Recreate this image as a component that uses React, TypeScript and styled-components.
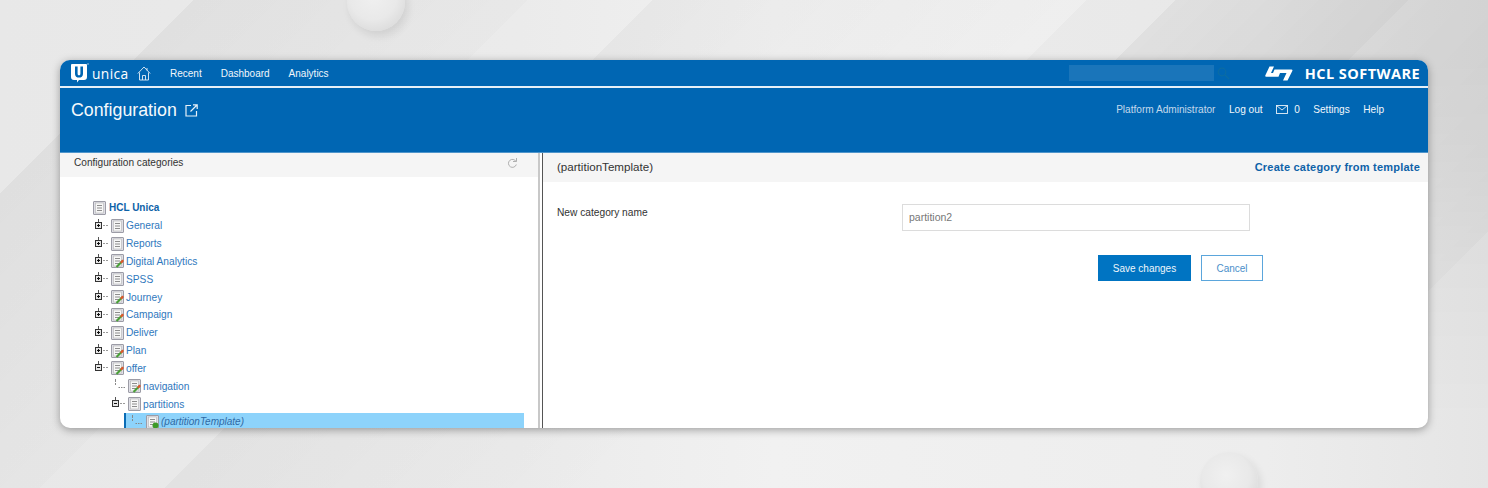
import React from 'react'
import styled, { createGlobalStyle } from 'styled-components'

const GlobalStyle = createGlobalStyle`
    html, body {
        margin: 0;
        padding: 0;
    }
    body {
        font-family: 'Liberation Sans', Arial, sans-serif;
        overflow: hidden;
    }
`

const Backdrop = styled.div`
    position: relative;
    width: 1488px;
    height: 488px;
    overflow: hidden;
    padding: 60px;
    box-sizing: border-box;
    background:
        linear-gradient(135deg, transparent 9.77%, rgba(0, 0, 0, 0.04) 9.77%, rgba(0, 0, 0, 0.012) 26.7%, transparent 26.7%),
        linear-gradient(135deg, transparent 33%, rgba(0, 0, 0, 0.03) 33%, transparent 55%),
        linear-gradient(90deg, #e8e8e8, #ebebeb 35%, #f1f1f1 52%, #ededed 85%, #e5e5e5);

    &::before {
        content: '';
        position: absolute;
        inset: 0;
        background: linear-gradient(
            135deg,
            transparent 55%,
            rgba(0, 0, 0, 0.02) 55%,
            rgba(0, 0, 0, 0.02) 59.5%,
            rgba(0, 0, 0, 0.06) 59.5%,
            rgba(0, 0, 0, 0.095) 71.3%,
            rgba(0, 0, 0, 0.07) 71.3%,
            rgba(0, 0, 0, 0.1) 87%,
            rgba(0, 0, 0, 0.06) 87%
        );
        mask-image: linear-gradient(to bottom, #000 60px, transparent 420px);
    }
`

const Sphere = styled.div<{ $left: number; $top: number }>`
    position: absolute;
    left: ${({ $left }) => $left}px;
    top: ${({ $top }) => $top}px;
    width: 58px;
    height: 58px;
    border-radius: 50%;
    background: radial-gradient(circle at 45% 40%, #f0f0f0 0%, #e9e9e9 50%, #dcdcdc 78%, #c0c0c0 100%);
    box-shadow: 3px 5px 9px rgba(0, 0, 0, 0.09);
`

const Panel = styled.div`
    position: relative;
    width: 1368px;
    height: 368px;
    display: flex;
    flex-direction: column;
    border-radius: 10px;
    overflow: hidden;
    background: #fff;
    box-shadow: 0 2px 9px rgba(0, 0, 0, 0.34);
`

const TopBar = styled.div`
    height: 26px;
    flex: none;
    display: flex;
    align-items: center;
    padding: 0 8px 0 11px;
    background: #0066b3;
    border-bottom: 2px solid #e6f0f8;
`

const Brand = styled.div`
    display: flex;
    align-items: center;
    width: 66px;
    flex: none;
    gap: 3px;
    color: #fff;
    font-family: 'Open Sans', sans-serif;
    font-size: 13.8px;
    letter-spacing: 0.4px;
`

const Nav = styled.nav`
    display: flex;
    gap: 19px;
    margin-left: 19px;
`

const NavLink = styled.span`
    color: #f2f7fb;
    font-size: 10px;
`

const SearchBox = styled.div`
    margin-left: auto;
    width: 145px;
    height: 16px;
    background: #1a75ba;
`

const SearchGlyph = styled.div`
    display: flex;
    margin-left: 3px;
    margin-right: 35px;
    color: #0b6ca4;
`

const SoftwareMark = styled.div`
    display: flex;
    align-items: center;
    gap: 12px;
    color: #fff;
    font-family: 'Open Sans', sans-serif;
    font-size: 14.5px;
    font-weight: 700;
    letter-spacing: 0.45px;
`

const Header = styled.header`
    height: 64px;
    flex: none;
    display: flex;
    justify-content: space-between;
    padding: 10px 44px 0 11px;
    box-sizing: border-box;
    background: #0066b3;
`

const PageTitle = styled.h1`
    display: flex;
    align-items: center;
    gap: 8px;
    height: 24px;
    margin: 0;
    color: #f5f9fc;
    font-size: 17.8px;
    font-weight: 400;
`

const UserLinks = styled.div`
    display: flex;
    align-items: center;
    gap: 13.5px;
    height: 23px;
    color: #f2f7fb;
    font-size: 10.1px;
`

const MutedLink = styled.span`
    color: #c3d9ec;
`

const Mail = styled.span`
    display: flex;
    align-items: center;
    gap: 6px;
`

const Body = styled.div`
    flex: 1;
    min-height: 0;
    display: flex;
    border-top: 1px solid #4f95cb;
`

const LeftPane = styled.aside`
    width: 478px;
    flex: none;
    overflow: hidden;
`

const LeftHead = styled.div`
    height: 24px;
    display: flex;
    justify-content: space-between;
    padding: 4px 20px 0 14px;
    box-sizing: border-box;
    background: #f5f5f5;
    color: #333;
    font-size: 10.1px;
`

const Tree = styled.div`
    padding-top: 22px;
`

const Row = styled.div<{ $indent: number; $selected?: boolean }>`
    display: flex;
    align-items: center;
    height: 17.84px;
    width: ${({ $selected }) => ($selected ? '398px' : 'auto')};
    margin-left: ${({ $indent }) => $indent}px;
    background: ${({ $selected }) => ($selected ? '#8dd3fb' : 'transparent')};
    border-left: ${({ $selected }) => ($selected ? '2px solid #0a6cb5' : '0')};
`

const Label = styled.span<{ $root?: boolean; $italic?: boolean }>`
    margin-left: ${({ $root }) => ($root ? 3 : 2)}px;
    color: ${({ $root, $italic }) => ($root ? '#0e62a8' : $italic ? '#2f6aa5' : '#2f78bd')};
    font-size: ${({ $root, $italic }) => ($root || $italic ? 10 : 10.2)}px;
    font-weight: ${({ $root }) => ($root ? 700 : 400)};
    font-style: ${({ $italic }) => ($italic ? 'italic' : 'normal')};
    white-space: nowrap;
`

const Divider = styled.div`
    width: 5px;
    flex: none;
    background: #fff;
    border-left: 2px solid #c8c8c8;
    border-right: 1px solid #555;
    box-sizing: border-box;
`

const RightPane = styled.main`
    flex: 1;
    min-width: 0;
`

const RightHead = styled.div`
    height: 29px;
    display: flex;
    align-items: center;
    justify-content: space-between;
    padding: 0 8px 2px 14px;
    box-sizing: border-box;
    background: #f5f5f5;
`

const RightTitle = styled.span`
    color: #333;
    font-size: 11.6px;
`

const HeadAction = styled.span`
    color: #0e62a8;
    font-size: 11px;
    font-weight: 700;
    letter-spacing: 0.22px;
`

const FormArea = styled.div`
    padding: 22px 0 0 14px;
`

const FieldRow = styled.div`
    display: grid;
    grid-template-columns: 345px 348px;
    align-items: start;
`

const FieldLabel = styled.label`
    padding-top: 3px;
    color: #333;
    font-size: 10.2px;
`

const FieldInput = styled.div`
    height: 27px;
    display: flex;
    align-items: center;
    padding: 0 0 2px 6px;
    box-sizing: border-box;
    border: 1px solid #dcdcdc;
    color: #777;
    font-size: 10.5px;
`

const Actions = styled.div`
    display: flex;
    gap: 10px;
    margin: 24px 0 0 541px;
`

const Button = styled.button<{ $primary?: boolean }>`
    height: 26px;
    width: ${({ $primary }) => ($primary ? 93 : 62)}px;
    padding: 0;
    box-sizing: border-box;
    font-family: inherit;
    font-size: 10px;
    color: ${({ $primary }) => ($primary ? '#eef6fb' : '#4b8fca')};
    background: ${({ $primary }) => ($primary ? '#0074c2' : '#fff')};
    border: 1px solid ${({ $primary }) => ($primary ? '#0074c2' : '#5ba6dc')};
`

const TreeGlyph = styled.svg`
    flex: none;
`

const Expander = ({ open }: { open?: boolean }) => (
    <TreeGlyph width="17" height="14" viewBox="0 0 17 14">
        <path d="M4.500 0v3" stroke="#555" />
        <rect x="1.500" y="3.500" width="6" height="6" fill="#e6e6e6" stroke="#333" />
        <path d="M3 6.500h3" stroke="#111" />
        {!open && <path d="M4.500 5v3" stroke="#111" />}
        <path d="M9 6.500h6" stroke="#999" strokeDasharray="2 1" />
    </TreeGlyph>
)

const Stub = ({ width, x }: { width: number; x: number }) => (
    <TreeGlyph width={width} height="14" viewBox={`0 0 ${width} 14`}>
        <path d={`M${x} 0v6`} stroke="#888" strokeDasharray="3 1" />
        <path d={`M${x + 3} 8.500h7`} stroke="#888" strokeDasharray="1.500 1" />
    </TreeGlyph>
)

const NodeIcon = ({ kind }: { kind: 'plain' | 'edit' | 'add' }) => (
    <TreeGlyph width="13" height="14" viewBox="0 0 13 14">
        <rect x="0.500" y="0.500" width="12" height="13" rx="0.500" fill="#dfdfe6" stroke="#9c9ca6" />
        <rect x="2.500" y="2" width="8" height="10" fill="#f7f7f7" stroke="#b4b4b4" strokeWidth="0.600" />
        <path d="M4 4.500h5M4 7h5M4 9.500h5" stroke="#808080" strokeWidth="0.900" />
        {kind === 'edit' && (
            <>
                <path d="M5.500 13l6-6" stroke="#4aa038" strokeWidth="2.200" />
                <path d="M9.800 8.700l2.500-2.500" stroke="#e0552b" strokeWidth="2.200" />
            </>
        )}
        {kind === 'add' && <circle cx="9.500" cy="10.500" r="3" fill="#3d9a27" />}
    </TreeGlyph>
)

const UnicaLogo = () => (
    <TreeGlyph width="18" height="20" viewBox="0 0 18 20">
        <path d="M1 1h14a1 1 0 0 1 1 1v12c0 2-1 3-3 3H8l-2 2.500V17H3c-2 0-3-1-3-3V2a1 1 0 0 1 1-1z" fill="#fff" />
        <path d="M4 3.500h2.600v7c0 1.300.6 1.800 1.400 1.800s1.400-.5 1.400-1.800v-7H12v7.500c0 2.500-1.700 3.600-4 3.600s-4-1.100-4-3.600z" fill="#0066b3" />
        <circle cx="17" cy="1" r="0.700" fill="#cfe0ef" />
    </TreeGlyph>
)

const HomeIcon = () => (
    <TreeGlyph width="14" height="15" viewBox="0 0 14 15" fill="none" stroke="#e4eef7" strokeWidth="0.900">
        <path d="M0.800 7.500L7 1l6.200 6.500" />
        <path d="M2.500 6.500V14h9V6.500" />
        <path d="M5.500 14V9.500h3V14" />
        <path d="M10 2v2.500" />
    </TreeGlyph>
)

const ExternalIcon = () => (
    <svg width="13" height="13" viewBox="0 0 13 13" fill="none" stroke="#e8f1f8" strokeWidth="1.200">
        <path d="M6 1.500H1v10.500h10.500V7" />
        <path d="M5.500 7.500L12 1M8 .8h4.200V5" />
    </svg>
)

const MailIcon = () => (
    <svg width="12" height="9" viewBox="0 0 12 9" fill="none" stroke="#e8f1f8" strokeWidth="0.900">
        <rect x="0.500" y="0.500" width="11" height="8" />
        <path d="M0.500 0.500L6 5l5.500-4.500" />
    </svg>
)

const SearchIcon = () => (
    <svg width="13" height="13" viewBox="0 0 13 13" fill="none" stroke="currentColor" strokeWidth="1.200">
        <circle cx="5" cy="5" r="3.800" />
        <path d="M8 8l4 4" />
    </svg>
)

const HclMark = () => (
    <svg width="28" height="15" viewBox="0 0 28 15" fill="#fff">
        <path d="M4.500 0.500h4.500L6 7h9l-1.500 3.800H1.200C0.200 10.800 0 10 .4 9.200z" />
        <path d="M9.500 3.500h17c1 0 1.200.8.800 1.600L22.500 14.500h-4.500l3.500-7.500H8z" />
    </svg>
)

const RefreshIcon = () => (
    <svg width="11" height="12" viewBox="0 0 11 12" fill="none" stroke="#b0b0b0" strokeWidth="1">
        <path d="M9 4.500A4 4 0 1 0 9.300 7.500" />
        <path d="M9.500 1v3.500H6" />
    </svg>
)

type TreeNode = {
    label: string
    icon: 'plain' | 'edit' | 'add'
    indent: number
    open?: boolean
    leaf?: boolean
}

const nodes: TreeNode[] = [
    { label: 'General', icon: 'plain', indent: 34 },
    { label: 'Reports', icon: 'plain', indent: 34 },
    { label: 'Digital Analytics', icon: 'edit', indent: 34 },
    { label: 'SPSS', icon: 'plain', indent: 34 },
    { label: 'Journey', icon: 'edit', indent: 34 },
    { label: 'Campaign', icon: 'edit', indent: 34 },
    { label: 'Deliver', icon: 'plain', indent: 34 },
    { label: 'Plan', icon: 'edit', indent: 34 },
    { label: 'offer', icon: 'edit', indent: 34, open: true },
    { label: 'navigation', icon: 'edit', indent: 51, leaf: true },
    { label: 'partitions', icon: 'plain', indent: 51, open: true },
]

const App = () => (
    <>
        <GlobalStyle />
        <Backdrop>
            <Sphere $left={347} $top={-27} />
            <Sphere $left={1200} $top={452} />
            <Panel>
                <TopBar>
                    <Brand>
                        <UnicaLogo />
                        unica
                    </Brand>
                    <HomeIcon />
                    <Nav>
                        <NavLink>Recent</NavLink>
                        <NavLink>Dashboard</NavLink>
                        <NavLink>Analytics</NavLink>
                    </Nav>
                    <SearchBox />
                    <SearchGlyph>
                        <SearchIcon />
                    </SearchGlyph>
                    <SoftwareMark>
                        <HclMark />
                        HCL SOFTWARE
                    </SoftwareMark>
                </TopBar>
                <Header>
                    <PageTitle>
                        Configuration
                        <ExternalIcon />
                    </PageTitle>
                    <UserLinks>
                        <MutedLink>Platform Administrator</MutedLink>
                        <span>Log out</span>
                        <Mail>
                            <MailIcon />0
                        </Mail>
                        <span>Settings</span>
                        <span>Help</span>
                    </UserLinks>
                </Header>
                <Body>
                    <LeftPane>
                        <LeftHead>
                            Configuration categories
                            <RefreshIcon />
                        </LeftHead>
                        <Tree>
                            <Row $indent={33}>
                                <NodeIcon kind="plain" />
                                <Label $root>HCL Unica</Label>
                            </Row>
                            {nodes.map((n) => (
                                <Row key={n.label} $indent={n.indent}>
                                    {n.leaf ? <Stub width={17} x={4.5} /> : <Expander open={n.open} />}
                                    <NodeIcon kind={n.icon} />
                                    <Label>{n.label}</Label>
                                </Row>
                            ))}
                            <Row $indent={64} $selected>
                                <Stub width={20} x={6.5} />
                                <NodeIcon kind="add" />
                                <Label $italic>(partitionTemplate)</Label>
                            </Row>
                        </Tree>
                    </LeftPane>
                    <Divider />
                    <RightPane>
                        <RightHead>
                            <RightTitle>(partitionTemplate)</RightTitle>
                            <HeadAction>Create category from template</HeadAction>
                        </RightHead>
                        <FormArea>
                            <FieldRow>
                                <FieldLabel>New category name</FieldLabel>
                                <FieldInput>partition2</FieldInput>
                            </FieldRow>
                            <Actions>
                                <Button $primary>Save changes</Button>
                                <Button>Cancel</Button>
                            </Actions>
                        </FormArea>
                    </RightPane>
                </Body>
            </Panel>
        </Backdrop>
    </>
)

export default App
